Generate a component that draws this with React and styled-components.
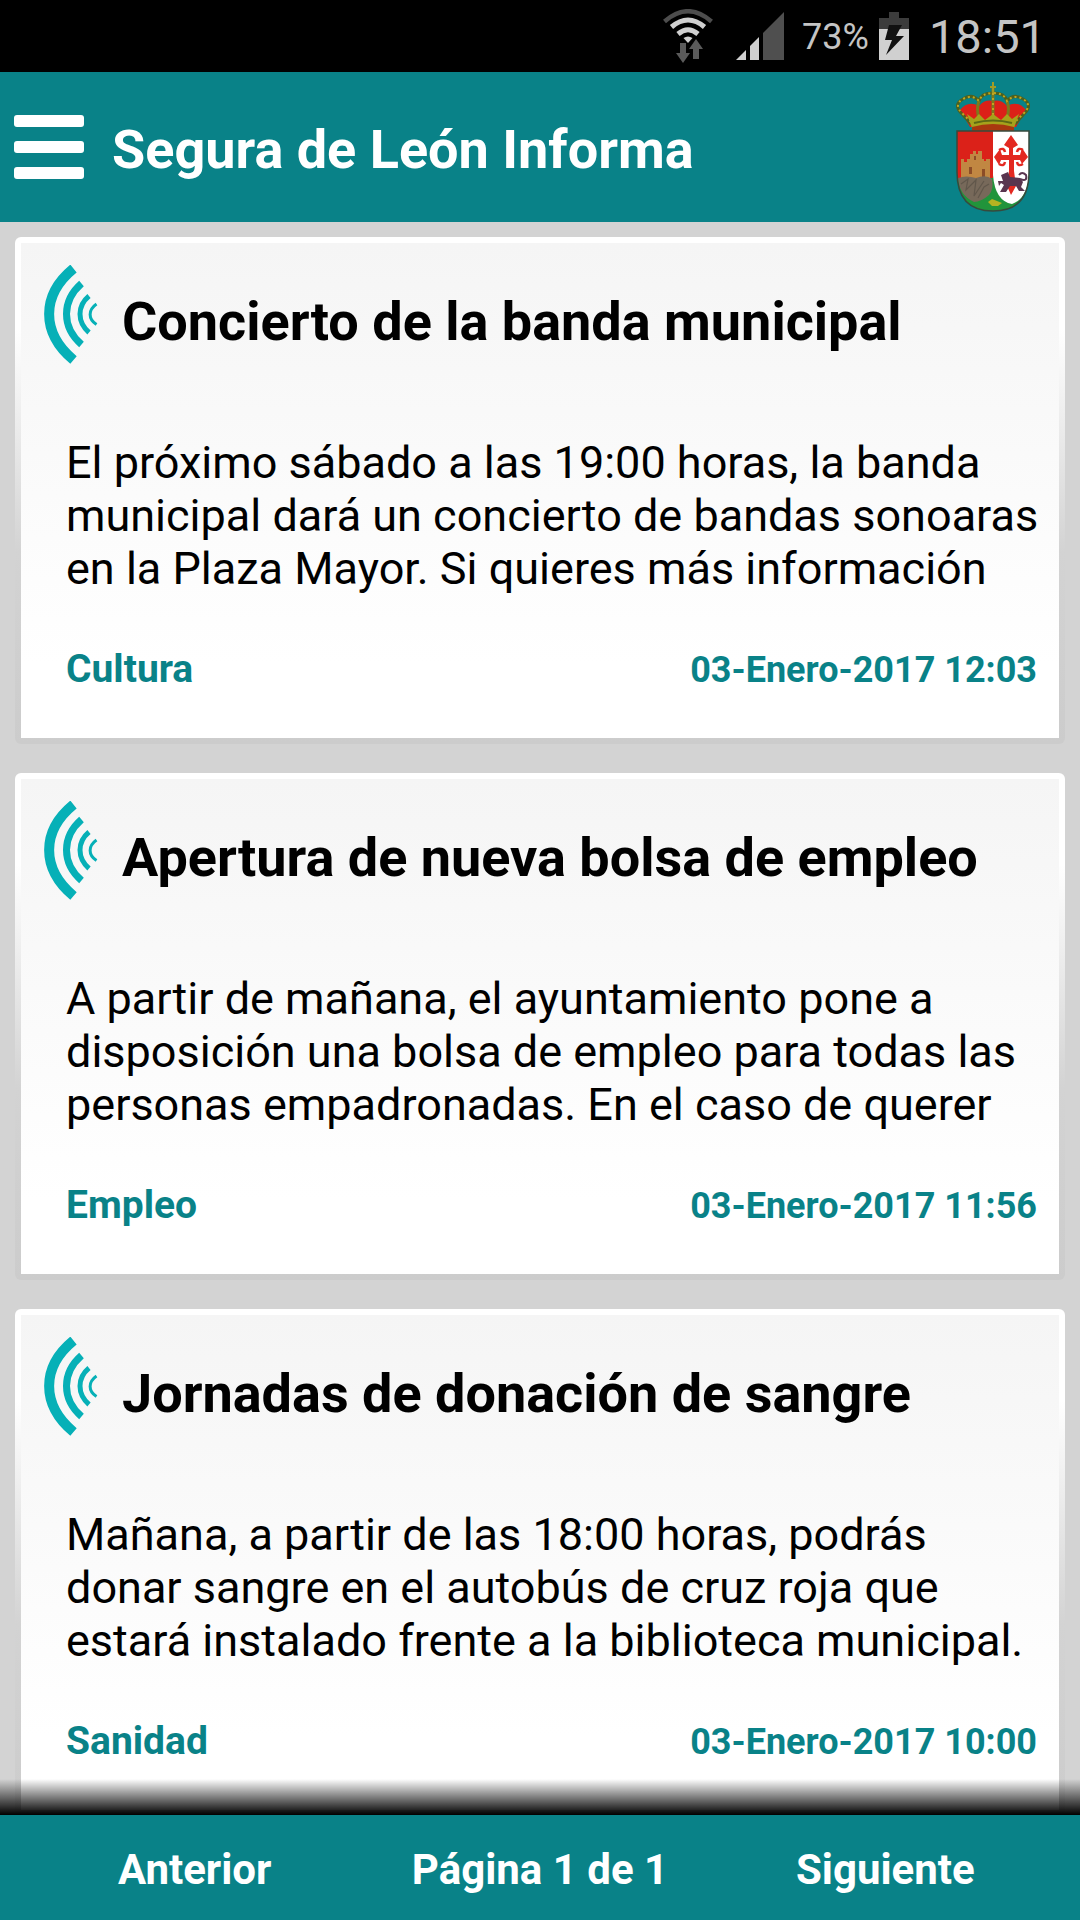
import React from "react";
import styled, { createGlobalStyle } from "styled-components";

const GlobalStyle = createGlobalStyle`
  * {
    box-sizing: border-box;
  }

  body {
    margin: 0;
    background: #d3d3d3;
    color: #000;
    font-family: Roboto, "Liberation Sans", sans-serif;
  }

  h1, h2, p {
    margin: 0;
  }
`;

const Screen = styled.div`
  display: flex;
  flex-direction: column;
  height: 100vh;
`;

const StatusBar = styled.div`
  display: flex;
  flex: none;
  align-items: center;
  justify-content: flex-end;
  height: 72px;
  padding-right: 34px;
  background: #000;
  color: #c4c4c4;

  svg {
    flex: none;
  }
`;

const Battery = styled.span`
  margin: 2px 10px 0 18px;
  font-size: 36px;
`;

const Clock = styled.span`
  margin-left: 20px;
  font-size: 47px;
`;

const Header = styled.header`
  display: flex;
  flex: none;
  align-items: center;
  height: 150px;
  padding: 0 48px 0 14px;
  background: #098288;
  color: #fff;
`;

const MenuButton = styled.button`
  display: flex;
  flex-direction: column;
  gap: 14px;
  width: 70px;
  margin-right: 28px;
  padding: 0;
  border: 0;
  background: none;
`;

const MenuLine = styled.span`
  height: 12px;
  border-radius: 3px;
  background: #fff;
`;

const AppTitle = styled.h1`
  flex: 1;
  padding-top: 4px;
  font-size: 54px;
  font-weight: 700;
`;

const News = styled.main`
  display: flex;
  flex: 1;
  flex-direction: column;
  gap: 29px;
  min-height: 0;
  padding: 15px 15px 0;
  overflow-y: auto;
  scrollbar-width: none;
`;

const Card = styled.article`
  flex: none;
  padding: 6px;
  border-radius: 6px;
  background: linear-gradient(#fff 18%, #d3d3d3 62%, #cccccc);
`;

const CardBody = styled.div`
  padding: 22px 14px 44px 22px;
  background: linear-gradient(#f5f5f5, #fff 85%);
`;

const CardHead = styled.div`
  display: flex;
  align-items: center;
  gap: 24px;
  height: 100px;
`;

const CardTitle = styled.h2`
  padding-top: 12px;
  font-size: 54px;
  font-weight: 700;
`;

const Text = styled.p`
  margin: 71px 0 0 23px;
  font-size: 45px;
  line-height: 53px;
`;

const CardFoot = styled.div`
  display: flex;
  align-items: baseline;
  justify-content: space-between;
  margin: 50px 8px 0 23px;
  color: #098288;
  font-weight: 700;
  line-height: 48px;
`;

const Category = styled.span`
  font-size: 39px;
`;

const Published = styled.time`
  font-size: 36px;
`;

const Footer = styled.footer`
  position: relative;
  display: grid;
  flex: none;
  grid-template-columns: repeat(3, 1fr);
  align-items: center;
  height: 105px;
  padding: 4px 22px 0;
  background: #098288;
  color: #fff;
  font-size: 42px;
  font-weight: 700;
  text-align: center;

  &::before {
    content: "";
    position: absolute;
    right: 0;
    bottom: 100%;
    left: 0;
    height: 36px;
    background: linear-gradient(transparent, #000);
  }
`;

const PageButton = styled.button`
  padding: 0;
  border: 0;
  background: none;
  color: inherit;
  font: inherit;
`;

const news = [
  {
    title: "Concierto de la banda municipal",
    text: "El próximo sábado a las 19:00 horas, la banda municipal dará un concierto de bandas sonoaras en la Plaza Mayor. Si quieres más información",
    category: "Cultura",
    date: "03-Enero-2017 12:03",
  },
  {
    title: "Apertura de nueva bolsa de empleo",
    text: "A partir de mañana, el ayuntamiento pone a disposición una bolsa de empleo para todas las personas empadronadas. En el caso de querer",
    category: "Empleo",
    date: "03-Enero-2017 11:56",
  },
  {
    title: "Jornadas de donación de sangre",
    text: "Mañana, a partir de las 18:00 horas, podrás donar sangre en el autobús de cruz roja que estará instalado frente a la biblioteca municipal.",
    category: "Sanidad",
    date: "03-Enero-2017 10:00",
  },
];

function WifiIcon() {
  return (
    <svg width="50" height="54" viewBox="0 0 50 54" fill="none" aria-hidden="true">
      <path d="M1.500 12.500Q25 -8 48.500 12.500" stroke="#4d4d4d" strokeWidth="4.500" />
      <path d="M8.500 18Q25 4 41.500 18" stroke="#d0d0d0" strokeWidth="5" />
      <path d="M15 25Q25 16.500 35 25" stroke="#d0d0d0" strokeWidth="5" />
      <path d="M20.500 29Q25 26 29.500 29L25 34Z" fill="#d0d0d0" />
      <path d="M17 34h6v10h4l-7 10-7-10h4z" fill="#5a5a5a" />
      <path d="M30 50V40h-4l7-10 7 10h-4v10z" fill="#5a5a5a" />
    </svg>
  );
}

function SignalIcon() {
  return (
    <svg width="48" height="48" viewBox="0 0 48 48" aria-hidden="true">
      <path d="M0 48L10 38V48Z" fill="#d0d0d0" />
      <path d="M14 48V34L23 25V48Z" fill="#d0d0d0" />
      <path d="M27 48V21L48 0V48Z" fill="#4f4f4f" />
    </svg>
  );
}

function BatteryIcon() {
  return (
    <svg width="30" height="48" viewBox="0 0 30 48" aria-hidden="true">
      <path d="M10 0H20V6H30V17H0V6H10Z" fill="#3c3c3c" />
      <path d="M0 17H30V48H0Z" fill="#d0d0d0" />
      <path d="M10 13H23L17 24H25L7 43L13 28H6Z" fill="#111" />
    </svg>
  );
}

function WavesIcon() {
  return (
    <svg width="55" height="100" viewBox="0 0 55 100" fill="none" stroke="#06b0b7" aria-hidden="true">
      <path d="M30.500 3.500C-2 30 -2 68 30.500 95" strokeWidth="10" />
      <path d="M38.500 18.500C18.500 36 18.500 62 38.500 79.500" strokeWidth="7" />
      <path d="M46 31C34 41 34 57 46 67.500" strokeWidth="5" />
      <path d="M53.500 39C45 45 45 54 53.500 59.500" strokeWidth="3" />
    </svg>
  );
}

function Crest() {
  return (
    <svg width="78" height="132" viewBox="0 0 78 132" role="img" aria-label="Escudo de Segura de León">
      <path d="M6 29Q14 19 25 25Q31 18 39 20Q47 18 53 25Q64 19 72 29L62 46H16Z" fill="#dc2018" />
      <path d="M17 43L9 34Q-2 24 9 18Q18 12 25 20Q27 12 39 12Q51 12 53 20Q60 12 69 18Q80 24 69 34L61 43" fill="none" stroke="#4c611f" strokeWidth="3" />
      <path d="M25 20Q22 28 25 37M53 20Q56 28 53 37M39 5V36" fill="none" stroke="#7d7a1c" strokeWidth="3" />
      <path d="M39 1V13M36 6H42" stroke="#a29c25" strokeWidth="2" />
      <g fill="none" stroke="#c0a620" strokeWidth="2" strokeDasharray="2 3">
        <path d="M17 41L9 33Q-1 24 9 18Q18 13 25 20Q28 12 39 12Q50 12 53 20Q60 13 69 18Q79 24 69 33L61 41" />
        <path d="M39 12V36" />
      </g>
      <path d="M13 33L20 38L25 33L31 39L39 33L47 39L53 33L58 38L65 33L60 47Q39 42 18 47Z" fill="#a6a21b" />
      <path d="M18 46Q39 40 60 46V50H18Z" fill="#a8380f" />
      <path d="M20 42Q39 37 58 42" fill="none" stroke="#5e6914" strokeWidth="2" />
      <path d="M3 50H75V91Q75 130 39 130Q3 130 3 91Z" fill="#21943b" />
      <path d="M3 50H39V97H3Z" fill="#db2119" />
      <path d="M7 78H10V81H13V78H16V73H19V70H22V73H24V70H28V78H30V80H32V78H36V97H7Z" fill="#c18742" />
      <path d="M15 86H18V93H15ZM28 88H31V97H28ZM20 75H22V79H20Z" fill="#8c4d27" />
      <path d="M4 97Q12 94 22 97Q32 93 38 98Q40 108 35 114Q27 121 20 121Q5 114 4 97Z" fill="#77695a" />
      <path d="M7 103L14 98L12 109L22 99L20 115L30 100M24 117L30 106L35 103" fill="none" stroke="#61574b" strokeWidth="1.200" />
      <path d="M39 50H75V94Q73 118 58 123Q41 120 39 94Z" fill="#fff" />
      <path d="M34 121L38 118L48 122L44 125H38Z" fill="#b5b322" />
      <path d="M57 54L64 64L59 67V74H66L68 67L74 76L68 83L66 79H60V90L62 105L57 114L53 105L55 90V79H47L45 84L40 76L46 68L48 74H55V67L50 64Z" fill="#e32921" />
      <path d="M45 69Q50 66 51 71M69 69Q64 66 63 71M45 83Q50 86 51 81M69 83Q64 86 63 81" fill="none" stroke="#e32921" strokeWidth="2.500" />
      <path d="M47 94L54 91L56 96L66 97L69 101L67 106L71 110H65L62 105H56L52 111H46L50 104L47 102L45 105L44 100H49Z" fill="#59354f" />
      <path d="M66 98Q74 101 72 94Q68 90 65 94" fill="none" stroke="#59354f" strokeWidth="2" />
      <path d="M3 50H75V91Q75 130 39 130Q3 130 3 91Z" fill="none" stroke="#374a3d" strokeWidth="1.500" />
    </svg>
  );
}

const StatusIcons = styled.div`
  display: flex;
  align-items: center;
  gap: 23px;
`;

function NewsCard({ item }) {
  return (
    <Card>
      <CardBody>
        <CardHead>
          <WavesIcon />
          <CardTitle>{item.title}</CardTitle>
        </CardHead>
        <Text>{item.text}</Text>
        <CardFoot>
          <Category>{item.category}</Category>
          <Published>{item.date}</Published>
        </CardFoot>
      </CardBody>
    </Card>
  );
}

export default function App() {
  return (
    <>
      <GlobalStyle />
      <Screen>
        <StatusBar>
          <StatusIcons>
            <WifiIcon />
            <SignalIcon />
          </StatusIcons>
          <Battery>73%</Battery>
          <BatteryIcon />
          <Clock>18:51</Clock>
        </StatusBar>
        <Header>
          <MenuButton type="button" aria-label="Menú">
            <MenuLine />
            <MenuLine />
            <MenuLine />
          </MenuButton>
          <AppTitle>Segura de León Informa</AppTitle>
          <Crest />
        </Header>
        <News>
          {news.map((item) => (
            <NewsCard key={item.title} item={item} />
          ))}
        </News>
        <Footer>
          <PageButton type="button">Anterior</PageButton>
          <span>Página 1 de 1</span>
          <PageButton type="button">Siguiente</PageButton>
        </Footer>
      </Screen>
    </>
  );
}
